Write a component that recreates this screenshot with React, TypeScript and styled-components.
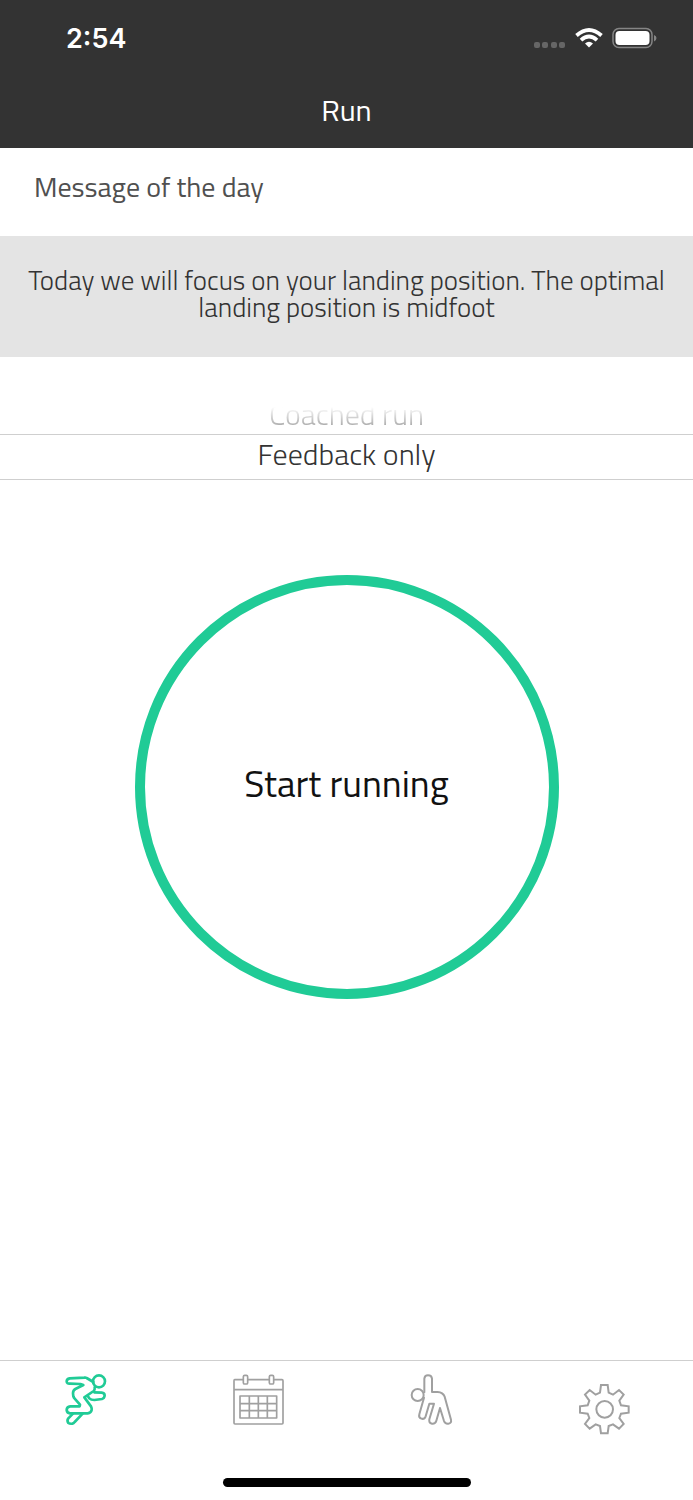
import React, { useState } from "react";
import styled, { createGlobalStyle } from "styled-components";

const GlobalStyle = createGlobalStyle`
  *, *::before, *::after { box-sizing: border-box; }
  body { margin: 0; background: #fff; }
  button { font: inherit; color: inherit; padding: 0; cursor: pointer; }
`;

const Screen = styled.div`
  display: flex;
  flex-direction: column;
  min-height: 100vh;
  background: #fff;
  color: #333;
  font-family: "Titillium Web", Roboto, sans-serif;
  font-weight: 300;
`;

const Header = styled.header`
  background: #333;
  color: #fff;
`;

const StatusBar = styled.div`
  display: flex;
  align-items: center;
  justify-content: space-between;
  height: 76px;
  padding: 2px 36px 0 66px;
`;

const Clock = styled.time`
  font: 600 27px/32px Inter, sans-serif;
`;

const StatusIcons = styled.svg`
  display: block;
  width: 124px;
  height: 24px;
`;

const NavTitle = styled.h1`
  margin: 0;
  height: 72px;
  font-size: 30px;
  font-weight: 400;
  line-height: 68px;
  text-align: center;
`;

const Main = styled.main`
  flex: 1;
  display: flex;
  flex-direction: column;
`;

const SectionTitle = styled.h2`
  margin: 0;
  padding: 23px 34px 33px;
  color: #505050;
  font-size: 28px;
  font-weight: 400;
  line-height: 32px;
`;

const Message = styled.p`
  margin: 0;
  padding: 30px 24px 37px;
  background: #e4e4e4;
  font-size: 27px;
  line-height: 27px;
  text-align: center;
`;

const Wheel = styled.div`
  display: flex;
  flex-direction: column;
  margin-top: 33px;
`;

const Option = styled.label<{ $selected: boolean }>`
  position: relative;
  display: block;
  height: ${(p) => (p.$selected ? 46 : 44)}px;
  line-height: ${(p) => (p.$selected ? 38 : 48)}px;
  font-size: 30px;
  text-align: center;
  border: solid #cfcfcf;
  border-width: ${(p) => (p.$selected ? "1px 0" : "0")};
  color: ${(p) => (p.$selected ? "#333" : "#999")};
  mask-image: ${(p) => (p.$selected ? "none" : "linear-gradient(transparent 17px, #000 40px)")};
  cursor: pointer;
`;

const HiddenRadio = styled.input`
  position: absolute;
  opacity: 0;
`;

const StartButton = styled.button`
  align-self: center;
  width: 61.2%;
  max-width: 424px;
  aspect-ratio: 1;
  margin: 95px 0 64px;
  padding-bottom: 8px;
  border: 10px solid #20cb96;
  border-radius: 50%;
  background: #fff;
  color: #111;
  && {
    font-size: 37px;
    font-weight: 400;
  }
`;

const TabBar = styled.nav`
  display: grid;
  grid-template-columns: repeat(4, 1fr);
  padding-top: 9px;
  border-top: 1px solid #cfcfcf;
`;

const Tab = styled.button<{ $active: boolean }>`
  display: flex;
  justify-content: center;
  border: 0;
  background: none;
  && {
    color: ${(p) => (p.$active ? "#20cb96" : "#a0a0a0")};
  }
`;

const TabIcon = styled.svg`
  display: block;
  width: 56px;
  height: 68px;
  fill: none;
  stroke: currentColor;
  stroke-width: 8;
  stroke-linecap: round;
  stroke-linejoin: round;
`;

const HomeArea = styled.div`
  display: flex;
  justify-content: center;
  padding: 40px 0 13px;
`;

const HomeIndicator = styled.div`
  width: 248px;
  height: 9px;
  border-radius: 5px;
  background: #000;
`;

const tabs = [
  {
    name: "Run",
    viewBox: "26 29 168 204",
    art: (
      <>
        <circle cx="146" cy="63" r="18" />
        <path d="M129 65 L109 53 Q106 51 102 52 L58 54 Q49 56 49 63 Q49 71 59 70 L90 71 L99 74 L75 86 Q68 90 68 99 L69 108 Q70 112 75 117 L89 133 L88 138 L60 138 Q49 139 49 149 Q50 158 59 159 L112 159 Q122 158 124 149 Q125 144 122 138 L102 111 L130 92 Q134 89 133 81" />
        <path d="M132 96 L154 97 Q163 98 163 106 Q162 114 155 116 L132 119 Q122 119 117 114 Q114 110 112 107" />
        <path d="M68 160 L54 174 Q49 181 54 188 Q58 191 66 190 Q70 189 73 185 L97 160" />
      </>
    ),
  },
  {
    name: "Calendar",
    viewBox: "36 29 168 204",
    art: (
      <g strokeWidth="5">
        <path d="M68 58 H44 Q42 58 42 61 V188 Q42 191 45 191 H186 Q189 191 189 188 V61 Q189 58 186 58 H162 M147 58 H84 M42 88 H189" />
        <rect x="70" y="45" width="13" height="26" rx="4" />
        <rect x="148" y="45" width="13" height="26" rx="4" />
        <path d="M60 107 H170 V173 H60 Z M60 130 H170 M60 151 H170 M88 107 V173 M115 107 V173 M142 107 V173" />
      </g>
    ),
  },
  {
    name: "Stretch",
    viewBox: "30 29 168 204",
    art: (
      <g strokeWidth="6">
        <circle cx="68" cy="104" r="18" />
        <path d="M88 96 V55 Q89 45 99 45 Q110 45 111 55 V95 H128 Q144 96 149 109 L168 178 Q170 189 160 190 Q150 191 147 182 L135 143 L124 181 Q121 191 111 190 Q101 188 103 177 L117 130 H103 L92 168 Q88 178 79 175 Q70 172 73 162 L87 112" />
      </g>
    ),
  },
  {
    name: "Settings",
    viewBox: "40 0 168 204",
    art: (
      <g strokeWidth="6" strokeLinejoin="miter">
        <circle cx="120" cy="118" r="25" />
        <path d="M109 45 H129 L132 68 L145 74 L163 60 L177 74 L164 92 L169 106 L192 109 V128 L169 131 L164 144 L177 162 L163 176 L145 163 L132 168 L129 190 H109 L106 168 L93 163 L75 176 L61 162 L74 144 L69 131 L46 128 V109 L69 106 L74 92 L61 74 L75 60 L93 74 L106 68 Z" />
      </g>
    ),
  },
];

const modes = ["Coached run", "Feedback only"];

export default function App() {
  const [mode, setMode] = useState("Feedback only");
  const [tab, setTab] = useState("Run");

  return (
    <>
      <GlobalStyle />
      <Screen>
        <Header>
          <StatusBar>
            <Clock>2:54</Clock>
            <StatusIcons viewBox="0 0 124 24" aria-hidden="true">
              <g fill="#666">
                {[1, 9, 18, 26].map((x) => (
                  <rect key={x} x={x} y="15" width="6" height="6" rx="2" />
                ))}
              </g>
              <g fill="none" stroke="#fff" strokeWidth="3.8">
                <path d="M43.5 8.5 Q56 -2.5 68.5 8.5" />
                <path d="M48 13.2 Q56 6 64 13.2" />
              </g>
              <path d="M52 16.5 Q56 13.2 60 16.5 L56 20.5 Z" fill="#fff" />
              <rect x="80" y="1.5" width="39" height="19" rx="6" fill="none" stroke="#858585" strokeWidth="1.5" />
              <rect x="82.5" y="4" width="34" height="14" rx="4" fill="#fff" />
              <path d="M121 8 Q123.5 9 123.5 11 Q123.5 13.5 121 14.5 Z" fill="#858585" />
            </StatusIcons>
          </StatusBar>
          <NavTitle>Run</NavTitle>
        </Header>

        <Main>
          <SectionTitle>Message of the day</SectionTitle>
          <Message>
            Today we will focus on your landing position. The optimal landing position is midfoot
          </Message>
          <Wheel role="radiogroup" aria-label="Run mode">
            {modes.map((name) => (
              <Option key={name} $selected={name === mode}>
                <HiddenRadio
                  type="radio"
                  name="mode"
                  checked={name === mode}
                  onChange={() => setMode(name)}
                />
                {name}
              </Option>
            ))}
          </Wheel>
          <StartButton type="button">Start running</StartButton>
        </Main>

        <TabBar aria-label="Main">
          {tabs.map(({ name, viewBox, art }) => (
            <Tab
              key={name}
              type="button"
              aria-label={name}
              $active={name === tab}
              onClick={() => setTab(name)}
            >
              <TabIcon viewBox={viewBox}>{art}</TabIcon>
            </Tab>
          ))}
        </TabBar>
        <HomeArea>
          <HomeIndicator />
        </HomeArea>
      </Screen>
    </>
  );
}
